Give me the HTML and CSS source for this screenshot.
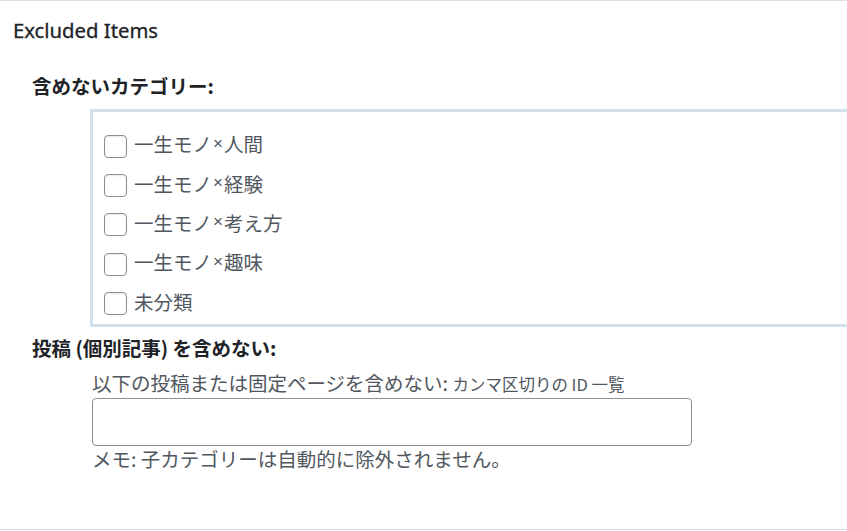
FILE: index.html
```html
<!DOCTYPE html>
<html lang="ja">
<head>
    <meta charset="UTF-8">
    <meta name="viewport" content="width=device-width, initial-scale=1.0">
    <title>Excluded Items</title>
    <link rel="stylesheet" href="styles.css">
</head>
<body>

<div class="panel">
    <h2 class="panel-title">Excluded Items</h2>

    <!-- Categories -->
    <div class="field">
        <p class="field-label">含めないカテゴリー:</p>
        <div class="cat-box">
            <label class="cat-item"><input type="checkbox"> 一生モノ<span class="times">×</span>人間</label>
            <label class="cat-item"><input type="checkbox"> 一生モノ<span class="times">×</span>経験</label>
            <label class="cat-item"><input type="checkbox"> 一生モノ<span class="times">×</span>考え方</label>
            <label class="cat-item"><input type="checkbox"> 一生モノ<span class="times">×</span>趣味</label>
            <label class="cat-item"><input type="checkbox"> 未分類</label>
        </div>
    </div>

    <!-- Posts -->
    <div class="field">
        <p class="field-label field-label-posts">投稿 (個別記事) を含めない:</p>
        <div class="field-body">
            <label class="desc" for="excludeIds">以下の投稿または固定ページを含めない: <small>カンマ区切りの ID 一覧</small></label>
            <input type="text" id="excludeIds" class="text-input">
            <p class="note">メモ: 子カテゴリーは自動的に除外されません。</p>
        </div>
    </div>
</div>

</body>
</html>
```

FILE: styles.css
```css
/* Page */
body {
    margin: 0;
    background-color: #ffffff;
    font-family: "Noto Sans CJK JP", "Noto Sans", sans-serif;
    color: #3c434a;
    overflow: hidden;
}

/* Panel wrapper */
.panel {
    border-top: 1px solid #dcdcde;
    border-bottom: 1px solid #dcdcde;
    height: 528px;
    overflow: hidden;
}

.panel-title {
    margin: 0;
    padding: 17px 13px 0;
    font-family: "Noto Sans", sans-serif;
    font-size: 20.3px;
    font-weight: 400;
    line-height: 24px;
    color: #1d2327;
    -webkit-text-stroke: 0.3px #1d2327;
}

/* Field labels */
.field-label {
    margin: 32px 0 11px 32px;
    font-size: 19.5px;
    font-weight: 700;
    line-height: 24px;
    color: #1d2327;
}

.field-label-posts {
    margin-top: 9px;
    margin-bottom: 11px;
}

/* Category checklist */
.cat-box {
    margin-left: 90px;
    width: 800px;
    padding: 12px 0 0 11px;
    height: 200px;
    border: 3px solid #d0e1ed;
}

.cat-item {
    display: flex;
    align-items: center;
    height: 39.4px;
    font-size: 19.5px;
    color: #50575e;
}

.cat-item input {
    appearance: none;
    flex-shrink: 0;
    width: 23px;
    height: 23px;
    margin: 5px 7px 0 0;
    border: 1px solid #8c8f94;
    border-radius: 4px;
    background-color: #fff;
    box-shadow: inset 0 1px 2px rgba(0, 0, 0, 0.1);
}

.times {
    font-family: "Liberation Sans", sans-serif;
    font-size: 17px;
    margin: 0 1px;
}

/* Posts field */
.field-body {
    margin-left: 92px;
}

.desc {
    display: block;
    font-size: 19.5px;
    line-height: 24px;
    color: #50575e;
}

.desc small {
    font-size: 16.5px;
}

.text-input {
    display: block;
    box-sizing: border-box;
    width: 600px;
    height: 48px;
    margin-top: 2px;
    border: 1px solid #8c8f94;
    border-radius: 4px;
}

.note {
    margin: 1px 0 0;
    font-size: 19.5px;
    line-height: 24px;
    color: #50575e;
}
```
